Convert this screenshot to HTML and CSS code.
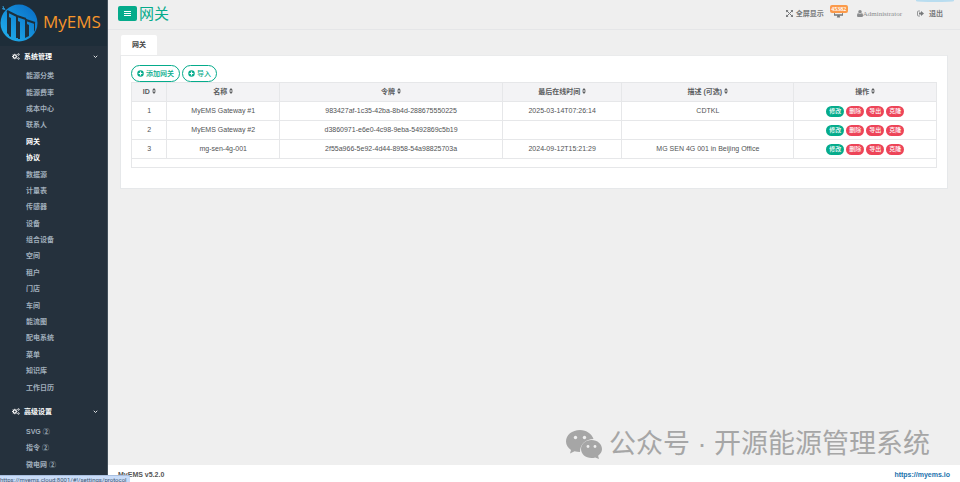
FILE: index.html
```
<!DOCTYPE html>
<html lang="zh-CN">
<head>
    <meta charset="UTF-8">
    <meta name="viewport" content="width=device-width, initial-scale=1.0">
    <title>MyEMS | 网关</title>
    <link rel="stylesheet" href="styles.css">
</head>
<body>
    <!-- Shared icons -->
    <svg class="icon-defs" aria-hidden="true">
        <symbol id="cogs" viewBox="0 0 16 14">
            <circle cx="5.5" cy="7" r="3.2" fill="none" stroke="currentColor" stroke-width="2.4"/>
            <path d="M5.5 1.5v2M5.5 10.5v2M0 7h2M9 7h2M1.6 3.1L3 4.5M8 9.5l1.4 1.4M1.6 10.9L3 9.5M8 4.5l1.4-1.4" stroke="currentColor" stroke-width="1.6"/>
            <circle cx="13" cy="3" r="1.6" fill="none" stroke="currentColor" stroke-width="1.6"/>
            <circle cx="13" cy="11" r="1.6" fill="none" stroke="currentColor" stroke-width="1.6"/>
        </symbol>
        <symbol id="down" viewBox="0 0 10 10">
            <path d="M1.5 3.5L5 7l3.500-3.500" fill="none" stroke="currentColor" stroke-width="1.7"/>
        </symbol>
        <symbol id="plus" viewBox="0 0 14 14">
            <path fill="currentColor" fill-rule="evenodd" d="M7 0.500a6.500 6.500 0 1 0 0 13a6.500 6.500 0 1 0 0-13zM5.800 3.200h2.400v2.600h2.600v2.400H8.200v2.600H5.800V8.200H3.200V5.800h2.600z"/>
        </symbol>
        <symbol id="sort" viewBox="0 0 8 12">
            <path d="M4 0l4 5H0zM4 12L0 7h8z" fill="currentColor"/>
        </symbol>
    </svg>

    <nav class="sidebar">
        <a class="logo" href="#">
            <svg class="logo-mark" viewBox="0 0 39 42">
                <defs>
                    <linearGradient id="sky" x1="0" y1="1" x2="1" y2="0">
                        <stop offset="0" stop-color="#22b4ee"/>
                        <stop offset="1" stop-color="#0769c4"/>
                    </linearGradient>
                </defs>
                <circle cx="19" cy="22" r="18.500" fill="url(#sky)"/>
                <path d="M7 10L17 15M17 15l9 3M26 19l9 3" fill="none" stroke="#1d2f3c" stroke-width="2"/>
                <path d="M7 10h2v24l-2-2zM16 15h2v22h-2zM25 18h2v18l-2 1zM34 21h1v8l-1 2z" fill="#1d2f3c"/>
                <path d="M9 16l2 1v19l-2-1zM18 20l2 1v17h-2zM27 23l2 1v11l-2 1z" fill="#1d2f3c"/>
                <path d="M3 5l1 4M2 8l2-1 1 2" fill="none" stroke="#2f9bd8" stroke-width="1"/>
            </svg>
            <span>MyEMS</span>
        </a>

        <a class="group-title" href="#"><svg class="cogs"><use href="#cogs"/></svg>系统管理<svg class="down"><use href="#down"/></svg></a>
        <ul class="menu menu-system">
            <li><a href="#">能源分类</a></li>
            <li><a href="#">能源费率</a></li>
            <li><a href="#">成本中心</a></li>
            <li><a href="#">联系人</a></li>
            <li><a class="active" href="#">网关</a></li>
            <li><a class="active" href="#">协议</a></li>
            <li><a href="#">数据源</a></li>
            <li><a href="#">计量表</a></li>
            <li><a href="#">传感器</a></li>
            <li><a href="#">设备</a></li>
            <li><a href="#">组合设备</a></li>
            <li><a href="#">空间</a></li>
            <li><a href="#">租户</a></li>
            <li><a href="#">门店</a></li>
            <li><a href="#">车间</a></li>
            <li><a href="#">能流图</a></li>
            <li><a href="#">配电系统</a></li>
            <li><a href="#">菜单</a></li>
            <li><a href="#">知识库</a></li>
            <li><a href="#">工作日历</a></li>
        </ul>

        <a class="group-title group-advanced" href="#"><svg class="cogs"><use href="#cogs"/></svg>高级设置<svg class="down"><use href="#down"/></svg></a>
        <ul class="menu menu-advanced">
            <li><a href="#">SVG ②</a></li>
            <li><a href="#">指令 ②</a></li>
            <li><a href="#">微电网 ②</a></li>
        </ul>
    </nav>

    <div class="page">
        <header class="topbar">
            <button class="toggle" type="button" aria-label="菜单">
                <svg viewBox="0 0 7 5"><path d="M0 0h7v1H0zM0 2h7v1H0zM0 4h7v1H0z" fill="currentColor"/></svg>
            </button>
            <h1>网关</h1>
            <div class="tools">
                <a class="fullscreen" href="#">
                    <svg viewBox="0 0 14 14"><path d="M2 2l10 10M12 2L2 12" stroke="currentColor" stroke-width="2"/><path d="M0 0h5L0 5zM14 0v5L9 0zM0 14V9l5 5zM14 14H9l5-5z" fill="currentColor"/></svg>
                    全屏显示
                </a>
                <a class="alarm" href="#">
                    <svg viewBox="0 0 16 14"><path d="M0 0h16v10H10l1 3H5l1-3H0zM1.500 1.500v6h13v-6z" fill="currentColor" fill-rule="evenodd"/></svg>
                    <span class="badge">45382</span>
                </a>
                <a class="user" href="#"><svg viewBox="0 0 12 14"><circle cx="6" cy="3.500" r="3.500" fill="currentColor"/><path d="M2 6q4 4 8 0q2 1 2 5q0 3-2 3H2q-2 0-2-3q0-4 2-5z" fill="currentColor"/></svg>Administrator</a>
                <a class="logout" href="#">
                    <svg viewBox="0 0 14 12"><path d="M6 1H3Q1 1 1 3v6q0 2 2 2h3" fill="none" stroke="currentColor" stroke-width="1.500"/><path d="M4 4h4V1l6 5-6 5V8H4z" fill="currentColor"/></svg>
                    退出
                </a>
            </div>
            <span class="glow"></span>
        </header>

        <main>
            <div class="tabs"><a href="#">网关</a></div>
            <section class="panel">
                <div class="actions">
                    <button type="button"><svg><use href="#plus"/></svg>添加网关</button>
                    <button type="button"><svg><use href="#plus"/></svg>导入</button>
                </div>
                <table>
                    <colgroup>
                        <col class="col-id"><col class="col-name"><col class="col-token"><col class="col-time"><col class="col-desc"><col class="col-ops">
                    </colgroup>
                    <thead>
                        <tr>
                            <th>ID <svg><use href="#sort"/></svg></th>
                            <th>名称 <svg><use href="#sort"/></svg></th>
                            <th>令牌 <svg><use href="#sort"/></svg></th>
                            <th>最后在线时间 <svg><use href="#sort"/></svg></th>
                            <th>描述 (可选) <svg><use href="#sort"/></svg></th>
                            <th>操作 <svg><use href="#sort"/></svg></th>
                        </tr>
                    </thead>
                    <tbody>
                        <tr>
                            <td>1</td>
                            <td>MyEMS Gateway #1</td>
                            <td>983427af-1c35-42ba-8b4d-288675550225</td>
                            <td>2025-03-14T07:26:14</td>
                            <td>CDTKL</td>
                            <td><div class="ops"><button class="edit" type="button">修改</button><button type="button">删除</button><button type="button">导出</button><button type="button">克隆</button></div></td>
                        </tr>
                        <tr>
                            <td>2</td>
                            <td>MyEMS Gateway #2</td>
                            <td>d3860971-e6e0-4c98-9eba-5492869c5b19</td>
                            <td></td>
                            <td></td>
                            <td><div class="ops"><button class="edit" type="button">修改</button><button type="button">删除</button><button type="button">导出</button><button type="button">克隆</button></div></td>
                        </tr>
                        <tr>
                            <td>3</td>
                            <td>mg-sen-4g-001</td>
                            <td>2f55a966-5e92-4d44-8958-54a98825703a</td>
                            <td>2024-09-12T15:21:29</td>
                            <td>MG SEN 4G 001 in Beijing Office</td>
                            <td><div class="ops"><button class="edit" type="button">修改</button><button type="button">删除</button><button type="button">导出</button><button type="button">克隆</button></div></td>
                        </tr>
                    </tbody>
                    <tfoot>
                        <tr><td colspan="6"></td></tr>
                    </tfoot>
                </table>
            </section>
        </main>

        <div class="watermark">
            <svg viewBox="0 0 36 29">
                <path d="M14 0C6 0 0 5 0 11.500c0 3.500 2 6.500 5 8.500l-1 3.500 4.500-2.200c1.800.5 3.500.7 5.500.7C14 14 20 9 27.500 9C26 4 20.500 0 14 0z" fill="#a6a6a6"/>
                <path d="M25.500 10C19.500 10 15 14 15 19s4.500 9 10.500 9c1.300 0 2.600-.2 3.700-.6L33 29l-.9-3.200C34.500 24 36 21.700 36 19c0-5-4.500-9-10.500-9z" fill="#a6a6a6"/>
                <circle cx="9.500" cy="7.500" r="1.700" fill="#efefef"/><circle cx="18.500" cy="7.500" r="1.700" fill="#efefef"/>
                <circle cx="22" cy="16.500" r="1.400" fill="#efefef"/><circle cx="29" cy="16.500" r="1.400" fill="#efefef"/>
            </svg>
            <span>公众号 · 开源能源管理系统</span>
        </div>

        <footer>
            <strong>MyEMS v5.2.0</strong>
            <a href="https://myems.io">https://myems.io</a>
        </footer>
    </div>

    <div class="status">https://myems.cloud:8001/#!/settings/protocol</div>
</body>
</html>
```

FILE: styles.css
```
* {
    box-sizing: border-box;
}
body {
    margin: 0;
    display: flex;
    min-height: 100vh;
    background: #efefef;
    color: #515355;
    font-family: "Liberation Sans", "Noto Sans CJK SC", sans-serif;
    font-size: 7px;
    line-height: 10px;
}
a {
    color: inherit;
    text-decoration: none;
}
button {
    font: inherit;
    border: none;
    cursor: pointer;
}
.icon-defs {
    position: absolute;
    width: 0;
    height: 0;
}

/* Sidebar */
.sidebar {
    flex: 0 0 108px;
    display: flex;
    flex-direction: column;
    padding-bottom: 9px;
    background: #25313d;
    border-right: 1px solid #43505b;
    color: #a0aebb;
    font-weight: bold;
}
.logo {
    display: flex;
    align-items: center;
    gap: 4px;
    height: 46px;
    padding-bottom: 3px;
    background: #1e2d39;
    color: #f7952b;
    font-family: "Open Sans", sans-serif;
    font-size: 17px;
    font-weight: 500;
    line-height: 24px;
}
.logo-mark {
    flex: none;
    width: 39px;
    height: 42px;
}
.group-title {
    display: flex;
    align-items: center;
    height: 22px;
    padding: 0 9px 1px 12px;
    color: #fff;
}
.group-advanced {
    height: 28px;
    padding-top: 5px;
}
.cogs {
    width: 8px;
    height: 7px;
    margin-right: 4px;
}
.down {
    width: 5px;
    height: 5px;
    margin-left: auto;
}
.menu {
    display: flex;
    flex-direction: column;
    margin: 0;
    padding: 0 0 0 26px;
    list-style: none;
}
.menu-system {
    flex: 20;
}
.menu-advanced {
    flex: 3;
}
.menu li {
    flex: 1;
    display: flex;
    align-items: center;
    min-height: 16px;
}
.menu .active {
    color: #fff;
}

/* Page */
.page {
    flex: 1;
    min-width: 0;
    display: flex;
    flex-direction: column;
}
.topbar {
    position: relative;
    display: flex;
    align-items: center;
    height: 30px;
    padding: 0 17px 2px 10px;
    border-bottom: 1px solid #e5e6e8;
}
.toggle {
    display: flex;
    align-items: center;
    justify-content: center;
    width: 19px;
    height: 15px;
    padding: 0;
    border-radius: 2px;
    background: #05ab8b;
    color: #fff;
}
.toggle svg {
    width: 7px;
    height: 5px;
}
h1 {
    margin: 0 0 0 2px;
    color: #05ab8b;
    font-size: 15px;
    font-weight: normal;
    line-height: 20px;
}
.tools {
    display: flex;
    align-items: center;
    margin-left: auto;
    color: #77797b;
}
.tools a {
    display: flex;
    align-items: center;
}
.tools svg {
    width: 7px;
    height: 7px;
}
.fullscreen,
.logout {
    gap: 3px;
    font-weight: bold;
}
.alarm {
    position: relative;
    margin: 0 14px 0 10px;
}
.tools .alarm svg {
    width: 9px;
    height: 8px;
}
.badge {
    position: absolute;
    top: -5px;
    left: -4px;
    width: 18px;
    border-radius: 2px;
    background: #fb9a4b;
    color: #fff;
    font-family: "Liberation Serif", serif;
    font-size: 6px;
    font-weight: bold;
    line-height: 8px;
    text-align: center;
}
.user {
    color: #8a8c8e;
    font-family: "Liberation Serif", serif;
}
.tools .user svg {
    width: 6px;
}
.logout {
    margin-left: 15px;
}
.logout svg {
    margin-right: 2px;
}
.glow {
    position: absolute;
    top: 0;
    right: 6px;
    width: 38px;
    height: 2px;
    border-radius: 0 0 50% 50%;
    background: #b9ddf0;
}
main {
    flex: 1;
    padding: 5px 12px 0 12px;
}
.tabs {
    display: flex;
}
.tabs a {
    padding: 5px 11px;
    margin-left: 1px;
    border-radius: 2px 2px 0 0;
    background: #fff;
    color: #444;
    font-weight: bold;
}
.panel {
    padding: 9px 10px 20px;
    border: 1px solid #e6e8ea;
    border-top-color: #eaebec;
    background: #fff;
}
.actions {
    display: flex;
    gap: 2px;
}
.actions button {
    display: flex;
    align-items: center;
    gap: 2px;
    height: 17px;
    padding: 0 5px;
    border: 1px solid #05ab8b;
    border-radius: 9px;
    background: #fff;
    color: #05ab8b;
    font-weight: 500;
}
.actions svg {
    width: 7px;
    height: 7px;
}

/* Gateway table */
table {
    width: 100%;
    border-collapse: collapse;
    table-layout: fixed;
    text-align: center;
}
.col-id { width: 4.4%; }
.col-name { width: 14%; }
.col-token { width: 27.7%; }
.col-time { width: 14.8%; }
.col-desc { width: 21.4%; }
.col-ops { width: 17.7%; }
th, td {
    height: 19px;
    padding: 0;
    border: 1px solid #e6e7e9;
}
th {
    background: #f3f3f5;
    color: #5a5c5e;
}
th svg {
    width: 4px;
    height: 6px;
}
tfoot td {
    height: 9px;
}
.ops {
    display: flex;
    justify-content: center;
    gap: 2px;
}
.ops button {
    width: 18px;
    height: 11px;
    padding: 0;
    border-radius: 6px;
    background: #ed4458;
    color: #fff;
    font-size: 6px;
    font-weight: 500;
    line-height: 11px;
}
.ops .edit {
    background: #05ab8b;
}

.watermark {
    display: flex;
    align-items: center;
    align-self: flex-end;
    gap: 7px;
    padding: 0 30px 1px 0;
    color: #a6a6a6;
    font-family: "Liberation Sans", "Noto Sans CJK SC", sans-serif;
    font-size: 27px;
    line-height: 40px;
}
.watermark svg {
    width: 36px;
    height: 29px;
}
footer {
    display: flex;
    align-items: center;
    justify-content: space-between;
    height: 17px;
    padding: 2px 10px 0;
    background: #fff;
    color: #555;
}
footer a {
    color: #2272ad;
    font-weight: bold;
}

/* Link preview in the window corner */
.status {
    position: fixed;
    left: 0;
    bottom: 0;
    height: 7px;
    padding-right: 3px;
    overflow: hidden;
    border-top: 1px solid #a9bfdf;
    border-radius: 0 2px 0 0;
    background: #c9dcf8;
    color: #3f556f;
    font-family: Roboto, sans-serif;
    font-size: 6px;
    line-height: 7px;
}
```
